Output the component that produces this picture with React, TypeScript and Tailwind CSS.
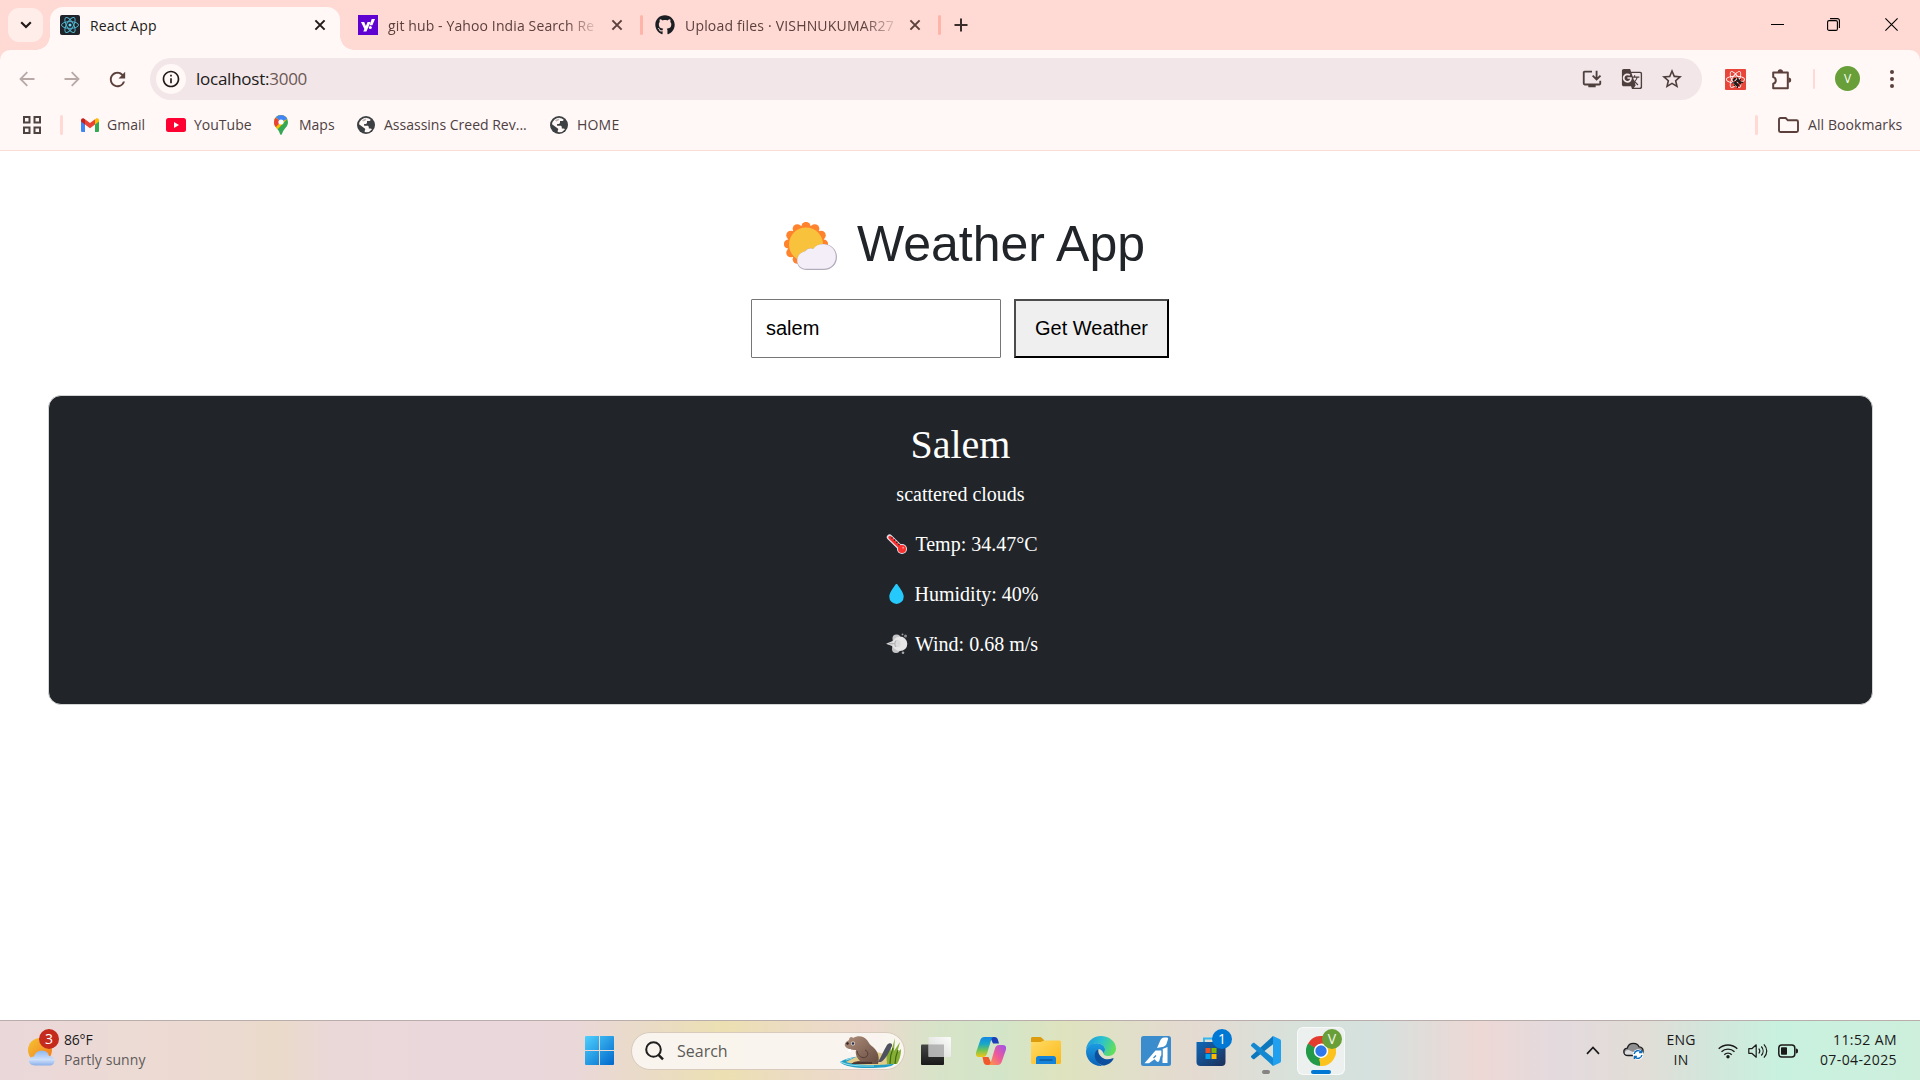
import React from "react";
import {
  MdOutlineInstallDesktop,
  MdGTranslate,
  MdStarOutline,
  MdInfoOutline,
  MdRefresh,
} from "react-icons/md";
import { FaGithub, FaReact, FaBug } from "react-icons/fa";

const ui = "font-['Open_Sans','Noto_Sans',sans-serif]";

/* ---------- small drawings ---------- */

function Cross({ className = "" }: { className?: string }) {
  return (
    <svg viewBox="0 0 12 12" className={`h-3 w-3 shrink-0 ${className}`}>
      <path d="M1.4 1.4l9.2 9.2M10.6 1.4l-9.2 9.2" stroke="currentColor" strokeWidth="2" fill="none" />
    </svg>
  );
}

function Arrow({ flip = false }: { flip?: boolean }) {
  return (
    <svg viewBox="0 0 16 16" className={flip ? "h-4 w-4 -scale-x-100" : "h-4 w-4"}>
      <path d="M15.500 8H2M8.300 1.200L1.500 8l6.800 6.800" stroke="#b8a9a7" strokeWidth="1.800" fill="none" />
    </svg>
  );
}

function Globe() {
  return (
    <svg viewBox="0 0 18 18" className="h-[18px] w-[18px] shrink-0">
      <circle cx="9" cy="9" r="9" fill="#3c4043" />
      <path
        d="M9.800 1.900c1.500.2 2.800.8 3.900 1.800-.2.900-.9 1.300-1.900 1.400H10v1.500c0 .9-.5 1.300-1.400 1.400l-1.500.1v1.600h3.200c1 0 1.500.6 1.500 1.500v1.200h1.500c.8 0 1.300.3 1.700.8a7.200 7.200 0 0 1-7.200 2.900c-.3-.7-.2-1.500.2-2.100.4-.5.300-1.100-.2-1.500L2 8.200A7.200 7.200 0 0 1 9.800 1.900z"
        fill="#fff8f6"
      />
      <path d="M5 4.200c1.500-1 3-1.600 4.600-1.500l-1.200 1.900-2 .8z" fill="#3c4043" fillOpacity=".35" />
    </svg>
  );
}

function Gmail() {
  return (
    <svg viewBox="0 0 18 14" className="h-[14px] w-[18px] shrink-0">
      <path d="M0 2.500V12.700C0 13.400.6 14 1.300 14H4V5.500z" fill="#4285f4" />
      <path d="M14 5.500V14h2.700c.7 0 1.300-.6 1.300-1.300V2.500z" fill="#34a853" />
      <path d="M4 1.300L9 5l5-3.700v5.200L9 10.300 4 6.500z" fill="#ea4335" />
      <path d="M0 2.300v1.300l4 3V1.300L3.200.700C1.800-.3 0 .6 0 2.300z" fill="#c5221f" />
      <path d="M14 1.300v5.300l4-3V2.300c0-1.700-1.800-2.600-3.200-1.600z" fill="#fbbc04" />
    </svg>
  );
}

function MapsPin() {
  return (
    <svg viewBox="0 0 14 20" className="h-5 w-[14px] shrink-0">
      <defs>
        <clipPath id="pin">
          <path d="M7 0a7 7 0 0 1 7 7c0 4-2.500 5.500-4.500 8.500C8.300 17.500 8 20 7 20s-1.300-2.500-2.500-4.500C2.500 12.500 0 11 0 7a7 7 0 0 1 7-7z" />
        </clipPath>
      </defs>
      <g clipPath="url(#pin)">
        <path d="M0 0h14v20H0z" fill="#34a853" />
        <path d="M0 0h14v3L3 15-1 9z" fill="#fbbc04" />
        <path d="M-1 1l8 5.500L2 12l-3-2z" fill="#ea4335" />
        <path d="M1.500 2L7 7l7-3.500V0H2z" fill="#4285f4" />
      </g>
      <circle cx="7" cy="7" r="2.600" fill="#fff" />
    </svg>
  );
}

function ReactFavicon() {
  return (
    <span className="flex h-5 w-5 shrink-0 items-center justify-center rounded-[2px] bg-[#20232a] text-[#4fb3cc]">
      <svg viewBox="0 0 20 20" className="h-5 w-5" fill="none" stroke="currentColor" strokeWidth="1">
        <ellipse cx="10" cy="10" rx="8.500" ry="3.400" />
        <ellipse cx="10" cy="10" rx="8.500" ry="3.400" transform="rotate(60 10 10)" />
        <ellipse cx="10" cy="10" rx="8.500" ry="3.400" transform="rotate(120 10 10)" />
        <circle cx="10" cy="10" r="1.500" fill="#61dafb" stroke="none" />
      </svg>
    </span>
  );
}

function YahooFavicon() {
  return (
    <span className="flex h-5 w-5 shrink-0 items-center justify-center bg-[#5f01d1]">
      <svg viewBox="0 0 20 20" className="h-5 w-5">
        <path d="M3 7h3.200l1.700 4L9.600 7h3L8.400 16.500H5.300L6.400 14z" fill="#fff" />
        <path d="M13.700 4H17l-2.600 6.200h-2.800z" fill="#fff" />
        <circle cx="12.300" cy="12.600" r="1.500" fill="#fff" />
      </svg>
    </span>
  );
}

function Puzzle() {
  return (
    <svg viewBox="0 0 22 22" className="h-[22px] w-[22px] shrink-0">
      <path
        d="M3.200 4.500h14.600v15.800H3.200v-4.600a3.400 3.400 0 0 0 0-6.600z"
        fill="none"
        stroke="#5b403c"
        strokeWidth="2"
        strokeLinejoin="round"
      />
      <path d="M7.600 4a2.700 2.700 0 0 1 5.400 0zM18.500 9.400a2.700 2.700 0 0 1 0 5.400z" fill="#5b403c" />
    </svg>
  );
}

function SunCloud() {
  const bumps = Array.from({ length: 12 }, (_, i) => (i * Math.PI) / 6);
  return (
    <svg viewBox="0 0 54 49" className="h-[49px] w-[54px] shrink-0">
      {bumps.map((a) => (
        <circle key={a} cx={22 + 17.5 * Math.cos(a)} cy={22 + 17.5 * Math.sin(a)} r="4.600" fill="#ff822d" />
      ))}
      <circle cx="22" cy="22" r="18.500" fill="#ff822d" />
      <circle cx="22" cy="22.500" r="17" fill="#f9c23c" />
      <path
        d="M22.500 48c-5.500 0-9.500-3.800-9.500-9 0-5 3.500-8.800 8-9.800 1.500-2.500 5.500-3.600 8.500-2.300 2.800-4.300 8-5.500 12.300-4.700 6.600.8 11.200 6.200 11.200 12.800C53 42.500 47.500 48 40 48z"
        fill="#b4acbc"
      />
      <path
        d="M22.500 46.800c-5.200 0-9.200-3.600-9.200-8.300 0-4.800 3.400-8.300 8-9.200 1.500-2.500 5.200-3.600 8-2.300 2.800-4.300 8-5.300 12-4.500 6 .8 10.500 5.800 10.500 12 0 6.800-4.800 12.300-12 12.300z"
        fill="#f3eef8"
      />
    </svg>
  );
}

function Thermometer() {
  return (
    <svg viewBox="0 0 22 22" className="h-[22px] w-[22px]">
      <path d="M3.600 4.200L15.700 16" stroke="#e5e1ea" strokeWidth="5.600" strokeLinecap="round" />
      <circle cx="16" cy="16" r="5" fill="#e5e1ea" />
      <path d="M4 4.500L16 16" stroke="#f8312f" strokeWidth="3.400" strokeLinecap="round" />
      <circle cx="16" cy="16" r="4" fill="#f8312f" />
      <path d="M6.500 4.300l-1 1.200M9 6.500L8 7.800M11.300 8.700l-1 1.300M13.500 10.900l-1 1.200" stroke="#2b2b30" strokeWidth="1.300" />
      <circle cx="17.200" cy="14.700" r="1" fill="#ff8a88" />
    </svg>
  );
}

function Droplet() {
  return (
    <svg viewBox="0 0 22 22" className="h-[22px] w-[22px]">
      <path
        d="M10.500 1c.7 0 1.200.7 1.800 1.700C14.500 6 17.700 10 17.700 13.700a7.200 7.200 0 0 1-14.400 0C3.300 10 6.500 6 8.700 2.700 9.300 1.700 9.800 1 10.500 1z"
        fill="#26c9fc"
      />
    </svg>
  );
}

function WindPuff() {
  return (
    <svg viewBox="0 0 22 22" className="h-[22px] w-[22px]">
      <circle cx="10.500" cy="5.500" r="4" fill="#c4c4c7" />
      <circle cx="10" cy="16" r="4" fill="#c4c4c7" />
      <path d="M0 10.700l6-2.400c1-1.500 3-2.500 5-2.400 4 0 7 2.300 7 5.500 0 3.500-3 5-7 4.500-3 0-4.500-1-5-3z" fill="#d8d8da" />
      <circle cx="14" cy="10.800" r="7.300" fill="#e6e6e6" />
      <circle cx="11" cy="10.700" r="3.600" fill="#dadadc" />
      <path d="M3 10.700h5.500M10 7.500c-1.500 1.500-1.500 5 0 6.500" stroke="#a5a5a8" strokeWidth=".9" fill="none" />
      <circle cx="19.500" cy="3" r="1.500" fill="#8b8b8f" />
      <circle cx="16.500" cy="1.400" r=".9" fill="#a5a5a8" />
      <circle cx="17" cy="19.800" r="1.300" fill="#a5a5a8" />
    </svg>
  );
}

function Beaver() {
  return (
    <svg viewBox="0 0 62 34" className="h-[34px] w-[62px]">
      <defs>
        <linearGradient id="fur" x1="0" x2="1" y1="0" y2="1">
          <stop offset="0" stopColor="#b08f7c" />
          <stop offset="1" stopColor="#654a3f" />
        </linearGradient>
      </defs>
      <path d="M0 27c8-5 18-6 30-6 14 0 25 3 24 8-2 3-12 4-26 4C14 33 4 31 0 27z" fill="#229fc4" />
      <path d="M6 27c8-4 15-8 26-10 9-1 20 5 26 9 2 3-14 4-26 4-12 0-20-1-26-3z" fill="#e2cc8c" />
      <path d="M1 27c7 4 20 4 33 4M6 25l6-2" stroke="#8edcec" strokeWidth="1.200" fill="none" />
      <path d="M47 29c-1-8 0-14 3-20l1 8 4-14-1 13 6-9-3 11 4-4c0 7-2 12-4 15z" fill="#86ad34" />
      <path d="M50 29c0-7 1-11 3-16M55 29c0-6 1-9 3-14" stroke="#3f6c16" strokeWidth="1.200" fill="none" />
      <path d="M38 27c3-5 6-12 9-17 2-3 6-2 5 1-3 6-6 13-11 16z" fill="#4f5160" />
      <path
        d="M12 29c2-3 5-3 8-3-3-3-5-7-4-11-5 0-9-1-11-4-1-3 2-5 4-6 0-3 3-4 4-2 5-3 11-2 14 2 2 3 3 5 6 7 5 4 7 11 5 17z"
        fill="url(#fur)"
      />
      <path d="M17 16c1 5 5 8 9 6 3-2 2-6-1-7" stroke="#563d33" strokeWidth="1" fill="none" />
      <path d="M11 29c4-3 12-2 21-2v2z" fill="#4c352e" />
      <circle cx="13" cy="8.500" r="2" fill="#eee9e6" />
      <circle cx="13" cy="8.500" r="1.300" fill="#252a45" />
      <path d="M8 14h3v3l-3-.5z" fill="#fff" />
      <path d="M6 8l2-1 1 2-2 1z" fill="#2c2525" />
    </svg>
  );
}

function WinLogo() {
  return (
    <svg viewBox="0 0 29 29" className="h-[29px] w-[29px]">
      <defs>
        <linearGradient id="win" x1="0" y1="0" x2="29" y2="29" gradientUnits="userSpaceOnUse">
          <stop offset="0" stopColor="#4fd0fd" />
          <stop offset="1" stopColor="#0067cb" />
        </linearGradient>
      </defs>
      <path
        d="M1 0h13v14H0V1a1 1 0 0 1 1-1zM15 0h13a1 1 0 0 1 1 1v13H15zM0 15h14v14H1a1 1 0 0 1-1-1zM15 15h14v13a1 1 0 0 1-1 1H15z"
        fill="url(#win)"
      />
    </svg>
  );
}

function TaskView() {
  return (
    <svg viewBox="0 0 30 30" className="h-[30px] w-[30px]">
      <defs>
        <linearGradient id="tvd" x1="0" x2="0" y1="0" y2="1">
          <stop offset="0" stopColor="#454545" />
          <stop offset="1" stopColor="#191919" />
        </linearGradient>
        <linearGradient id="tvl" x1="0" x2="1" y1="1" y2="0">
          <stop offset="0" stopColor="#d8d8d8" />
          <stop offset="1" stopColor="#ffffff" />
        </linearGradient>
      </defs>
      <rect x="0" y="8.500" width="23" height="20.500" rx="1" fill="url(#tvd)" />
      <rect x="7.500" y="1" width="22.500" height="20" rx="1" fill="url(#tvl)" fillOpacity=".9" />
      <path d="M7.500 8.500H23V21H7.500z" fill="#a8a8a8" fillOpacity=".75" />
    </svg>
  );
}

function Copilot() {
  return (
    <svg viewBox="0 0 30 28" className="h-7 w-[30px]">
      <defs>
        <linearGradient id="cpa" x1="0" x2="0" y1="0" y2="1">
          <stop offset="0" stopColor="#1288e4" />
          <stop offset=".35" stopColor="#17a8c8" />
          <stop offset=".65" stopColor="#6cc35b" />
          <stop offset="1" stopColor="#f3c613" />
        </linearGradient>
        <linearGradient id="cpb" x1="1" x2="0" y1="0" y2="1">
          <stop offset="0" stopColor="#9a54ee" />
          <stop offset=".5" stopColor="#ee5a9a" />
          <stop offset="1" stopColor="#ff9f3a" />
        </linearGradient>
      </defs>
      <path d="M14 0h4.500c2 0 3 1.200 3.500 3l1 3.500h-6z" fill="#1b3fb8" />
      <path d="M8.500 0H18c-2 0-2.600 2-3.200 4l-3.600 12c-.7 2.500-2 4-4.500 4H3c-2.500 0-3.600-2-3-4.500L4 4c.8-2.500 2-4 4.500-4z" fill="url(#cpa)" />
      <path d="M16 28h-5c-2 0-3-1.200-3.500-3L6.500 20h6z" fill="#f0592c" />
      <path d="M21.500 28H12c2 0 2.600-2 3.200-4l3.600-12c.7-2.500 2-4 4.500-4H27c2.500 0 3.600 2 3 4.500L26 24c-.8 2.500-2 4-4.500 4z" fill="url(#cpb)" />
    </svg>
  );
}

function Explorer() {
  return (
    <svg viewBox="0 0 30 27" className="h-[27px] w-[30px]">
      <defs>
        <linearGradient id="fld" x1="0" x2="1" y1="0" y2="1">
          <stop offset="0" stopColor="#ffdb66" />
          <stop offset="1" stopColor="#fcb918" />
        </linearGradient>
      </defs>
      <path d="M0 1.500C0 .7.700 0 1.500 0H9c.8 0 1.300.3 1.900.9L13 3v5H0z" fill="#dc9c0c" />
      <path d="M0 5h9.500L13 3.500h15.500A1.500 1.500 0 0 1 30 5v20.500c0 .8-.7 1.500-1.500 1.500h-27A1.500 1.500 0 0 1 0 25.500z" fill="url(#fld)" />
      <path d="M5 27v-5.500C5 20 6 19 7.500 19h15c1.500 0 2.500 1 2.500 2.500V27z" fill="#1583d8" />
      <path d="M8.500 23h13" stroke="#0b4f8f" strokeWidth="1.200" />
    </svg>
  );
}

function Edge() {
  return (
    <svg viewBox="0 0 30 30" className="h-[30px] w-[30px]">
      <defs>
        <linearGradient id="eda" x1="0" x2="1" y1=".2" y2=".5">
          <stop offset="0" stopColor="#1f97dd" />
          <stop offset=".5" stopColor="#2bc2cf" />
          <stop offset="1" stopColor="#61df5b" />
        </linearGradient>
        <linearGradient id="edb" x1="0" x2="0" y1="0" y2="1">
          <stop offset="0" stopColor="#1b9de2" />
          <stop offset="1" stopColor="#0b62b8" />
        </linearGradient>
      </defs>
      <path d="M0 14C.5 6 7 0 15 0s15 5.500 15 12.500c0 4.500-3.500 7.500-7.500 7.500-3.500 0-5-1.500-5-2.600 0-.8 1.500-1.700 1.500-4C19 10 15.500 7.500 11 7.500 5.500 7.500 1.200 10 0 14z" fill="url(#eda)" />
      <path d="M0 15.500C.3 10.500 4.500 7.300 10 7.300c5 0 9 2.500 9 6.200 0 2.300-1.300 3.200-1.500 4-1-3-3-4.500-5-4.500-3 2-4 9-.5 13.500 1.500 2 3.500 3.100 5 3.300C7.500 31 0 24 0 15.500z" fill="url(#edb)" />
      <path d="M12.500 13c-3.500 1.500-4.500 6-3 10 1.500 4 5.500 6.800 9 6.600 4-.8 7.300-3.300 9-6.500.4-.8-.3-1.200-1-.8-3 1.500-7.500 1.500-10.500-.8-3.200-2.300-4.300-5.500-3.500-8.500z" fill="#0c4f9e" />
    </svg>
  );
}

function AiApp() {
  return (
    <svg viewBox="0 0 30 30" className="h-[30px] w-[30px]">
      <rect width="30" height="30" rx="2.500" fill="#3b8ccd" />
      <path d="M16 12L19.500 4c.8-1.600 2-2.500 3.600-2.500H26c1 0 1.300 1 .9 2L25.500 8c-.6 1.600-1.800 2.300-3 2.800z" fill="#fff" />
      <path d="M14.500 14.500l6.500 0v3.800c0 .9-.5 1.400-1.400 1.700l-1.200 4.500c-.5 1.400-1.500 1.800-2.600.9l-2.300-2.200-5.500 4H3.500z" fill="#fff" />
      <path d="M21.500 13l5-2v16h-5z" fill="#fff" />
      <path d="M15 19.500l-2.500 2.500M21 13.500v8" stroke="#3b8ccd" strokeWidth="1.300" />
    </svg>
  );
}

function Store() {
  return (
    <svg viewBox="0 0 30 30" className="h-[30px] w-[30px]">
      <defs>
        <linearGradient id="sto" x1="0" x2="1" y1="0" y2="1">
          <stop offset="0" stopColor="#0f68b8" />
          <stop offset="1" stopColor="#1d2f59" />
        </linearGradient>
      </defs>
      <path d="M8 6V2.500h12" stroke="#33b8ee" strokeWidth="2" fill="none" />
      <path d="M.5 6h29v20a4 4 0 0 1-4 4h-21a4 4 0 0 1-4-4z" fill="url(#sto)" />
      <path d="M9.500 12h5v5h-5z" fill="#f25022" />
      <path d="M15.500 12h5v5h-5z" fill="#7fba00" />
      <path d="M9.500 18h5v5h-5z" fill="#00a4ef" />
      <path d="M15.500 18h5v5h-5z" fill="#ffb900" />
    </svg>
  );
}

function VsCode() {
  return (
    <svg viewBox="0 0 30 30" className="h-[30px] w-[30px]">
      <path d="M22 0l7 3.200c.7.400 1 .9 1 1.700v20.200c0 .8-.3 1.300-1 1.700L22 30z" fill="#22a0f0" />
      <path d="M22 0v8.300L3.500 23c-.6.4-1.100.4-1.600 0L.4 21.500c-.6-.6-.6-1.200 0-1.800z" fill="#0d77bd" />
      <path d="M22 30v-8.300L3.500 7c-.6-.4-1.100-.4-1.600 0L.4 8.500c-.6.6-.6 1.200 0 1.800z" fill="#1489d2" />
    </svg>
  );
}

function Chrome() {
  return (
    <svg viewBox="0 0 30 30" className="h-[30px] w-[30px]">
      <path d="M15 15V30A15 15 0 0 1 2 7.500z" fill="#229a48" />
      <path d="M15 15L28 7.500A15 15 0 0 1 14 30z" fill="#fcc31e" />
      <path d="M15 7.500h13L22 17z" fill="#fcc31e" />
      <path d="M2 7.500l6.500 11.200L15 15z" fill="#229a48" />
      <path d="M21.500 18.700L15 30l-2-7z" fill="#fcc31e" />
      <path d="M2 7.500A15 15 0 0 1 28 7.500H15l-6.500 4z" fill="#e33b2e" />
      <circle cx="15" cy="15" r="7.200" fill="#fff" />
      <circle cx="15" cy="15" r="5.700" fill="#2f78ec" />
    </svg>
  );
}

/* ---------- browser chrome ---------- */

function TabStrip() {
  return (
    <div className={`flex h-[50px] w-full bg-[#ffd9d3] text-[14px] ${ui}`}>
      <div className="ml-2 mt-2 flex h-[34px] w-[35px] shrink-0 items-center justify-center rounded-[11px] bg-[#ffede9]">
        <svg viewBox="0 0 12 8" className="h-2 w-3">
          <path d="M1.200 1.300L6 6l4.800-4.700" stroke="#201a19" strokeWidth="2.200" fill="none" />
        </svg>
      </div>

      <div className="relative ml-[7px] mt-[7px] flex h-[43px] w-[290px] shrink-0 items-center rounded-t-[13px] bg-[#fff8f6] pb-[7px] pl-[10px] text-[#201a19]">
        <span className="absolute -left-[14px] bottom-0 h-[14px] w-[14px] bg-[radial-gradient(circle_at_0_0,transparent_13.500px,#fff8f6_14px)]" />
        <span className="absolute -right-[14px] bottom-0 h-[14px] w-[14px] bg-[radial-gradient(circle_at_100%_0,transparent_13.500px,#fff8f6_14px)]" />
        <ReactFavicon />
        <span className="ml-[10px] mt-px w-[225px] whitespace-nowrap tracking-[0.12px]">React App</span>
        <Cross className="-ml-[1px]" />
      </div>

      <div className="ml-[18px] flex h-[50px] w-[265px] shrink-0 items-center text-[#5b403c]">
        <YahooFavicon />
        <span className="ml-[10px] mt-px w-[212px] whitespace-nowrap tracking-[0.12px] [mask-image:linear-gradient(to_right,black_178px,transparent_212px)]">
          git hub - Yahoo India Search Re
        </span>
        <Cross className="ml-[13px]" />
      </div>
      <div className="ml-[17px] mt-[15px] h-5 w-[3px] rounded bg-[#ffb4a9]" />

      <div className="ml-3 flex h-[50px] w-[267px] shrink-0 items-center text-[#5b403c]">
        <FaGithub className="h-5 w-5 shrink-0 text-[#1b1f23]" />
        <span className="ml-[10px] mt-px w-[212px] whitespace-nowrap tracking-[0.18px] [mask-image:linear-gradient(to_right,black_178px,transparent_216px)]">
          Upload files · VISHNUKUMAR27
        </span>
        <Cross className="ml-[12px]" />
      </div>
      <div className="ml-4 mt-[15px] h-5 w-[3px] rounded bg-[#ffb4a9]" />
      <svg viewBox="0 0 14 14" className="ml-[13px] mt-[18px] h-[14px] w-[14px]">
        <path d="M7 .5v13M.5 7h13" stroke="#3b2d2a" strokeWidth="2" />
      </svg>

      <div className="ml-auto mr-[22px] mt-[18px] flex h-[13px] items-start text-black">
        <svg viewBox="0 0 13 13" className="h-[13px] w-[13px]">
          <path d="M0 6.500h13" stroke="currentColor" strokeWidth="1" />
        </svg>
        <svg viewBox="0 0 13 13" className="ml-[43px] h-[13px] w-[13px]" fill="none" stroke="currentColor" strokeWidth="1.100">
          <rect x=".6" y="2.600" width="9.800" height="9.800" rx="1.500" />
          <path d="M3 .6h7.400a2 2 0 0 1 2 2V10" />
        </svg>
        <svg viewBox="0 0 13 13" className="ml-[45px] h-[13px] w-[13px]">
          <path d="M.4.4l12.200 12.200M12.600.4L.4 12.600" stroke="currentColor" strokeWidth="1.100" />
        </svg>
      </div>
    </div>
  );
}

function Toolbar() {
  return (
    <div className="flex h-[50px] items-center pt-[8px]">
      <div className="ml-[19px] flex h-[42px] w-[131px] shrink-0 items-center">
        <Arrow />
        <span className="ml-[29px] h-4">
          <Arrow flip />
        </span>
        <MdRefresh className="ml-[26px] h-[23px] w-[23px] text-[#5b403c]" />
      </div>
      <div className="flex h-[42px] w-[1552px] shrink-0 items-center rounded-full bg-[#f2e6e8] pl-[6px] text-[#4d3f3c]">
        <span className="flex h-[30px] w-[30px] items-center justify-center rounded-full bg-[#fff8f6]">
          <MdInfoOutline className="h-5 w-5 text-[#201a19]" />
        </span>
        <span className={`ml-[10px] text-[17px] tracking-[-0.25px] ${ui}`}>
          <span className="text-[#201a19]">localhost:</span>
          <span className="text-[#6b5854]">3000</span>
        </span>
        <span className="ml-auto mr-[19px] flex items-center gap-[18px]">
          <MdOutlineInstallDesktop className="h-[22px] w-[22px]" />
          <MdGTranslate className="h-[22px] w-[22px]" />
          <MdStarOutline className="-mx-[1px] h-6 w-6" />
        </span>
      </div>
      <span className="relative ml-[23px] flex h-[21px] w-[21px] shrink-0 items-center justify-center rounded-[1px] bg-[#e8463a]">
        <FaReact className="h-[19px] w-[19px] text-white" />
        <FaBug className="absolute left-[7px] top-[8px] h-[10px] w-[10px] -rotate-45 text-[#201a19]" />
      </span>
      <span className="ml-[24px]">
        <Puzzle />
      </span>
      <span className="ml-[21px] h-5 w-[2px] rounded bg-[#ffd9d3]" />
      <span className={`-mt-px ml-5 flex h-[25px] w-[25px] items-center justify-center rounded-full bg-[#689f38] text-[12px] text-white ${ui}`}>V</span>
      <svg viewBox="0 0 4 18" className="ml-[30px] h-[18px] w-1" fill="#5b403c">
        <circle cx="2" cy="2" r="2" />
        <circle cx="2" cy="9" r="2" />
        <circle cx="2" cy="16" r="2" />
      </svg>
    </div>
  );
}

function Bookmark({ className = "", children }: { className?: string; children: React.ReactNode }) {
  return <span className={`-mt-[2px] shrink-0 ${className}`}>{children}</span>;
}

function Bookmarks() {
  return (
    <div className={`flex h-[50px] items-center whitespace-nowrap pl-[23px] text-[14px] text-[#4d4043] ${ui}`}>
      <svg viewBox="0 0 18 18" className="h-[18px] w-[18px] shrink-0" fill="none" stroke="#4f4340" strokeWidth="2">
        <path d="M1 1h5.500v5.500H1zM11.500 1H17v5.500h-5.500zM1 11.500h5.500V17H1zM11.500 11.500H17V17h-5.500z" />
      </svg>
      <span className="ml-[19px] mr-[18px] h-5 w-[3px] shrink-0 rounded bg-[#ffd9d3]" />
      <Gmail />
      <Bookmark className="ml-[8px] w-[59px]">Gmail</Bookmark>
      <svg viewBox="0 0 20 14" className="h-[14px] w-5 shrink-0">
        <rect width="20" height="14" rx="2.500" fill="#ff0033" />
        <path d="M8 4v6l5-3z" fill="#fff" />
      </svg>
      <Bookmark className="ml-[8px] w-[80px]">YouTube</Bookmark>
      <MapsPin />
      <Bookmark className="ml-[11px] w-[58px]">Maps</Bookmark>
      <Globe />
      <Bookmark className="ml-[9px] w-[166px]">Assassins Creed Rev...</Bookmark>
      <Globe />
      <Bookmark className="ml-[9px] tracking-[0.2px]">HOME</Bookmark>
      <span className="ml-auto mr-5 h-5 w-[3px] rounded bg-[#ffd9d3]" />
      <svg viewBox="0 0 21 16" className="h-4 w-[21px]">
        <path
          d="M1 13.500V2.500C1 1.700 1.600 1 2.400 1h5.300l2.200 2.300h8.700c.8 0 1.400.6 1.400 1.400v8.900c0 .8-.6 1.400-1.400 1.400H2.400c-.8 0-1.400-.7-1.400-1.500z"
          fill="none"
          stroke="#5b403c"
          strokeWidth="1.900"
        />
      </svg>
      <Bookmark className="ml-[9px] w-[112px] tracking-[0.08px]">All Bookmarks</Bookmark>
    </div>
  );
}

/* ---------- page ---------- */

function Reading({ icon, children }: { icon: React.ReactNode; children: React.ReactNode }) {
  return (
    <div className="mt-5 flex h-[30px] items-center justify-center gap-[7px] pl-[3px]">
      {icon}
      <span>{children}</span>
    </div>
  );
}

function WeatherPage() {
  return (
    <main className="flex h-[869px] flex-col items-center bg-white">
      <h1 className="mt-[63px] flex h-[60px] items-center pl-[9px] font-['Liberation_Sans',sans-serif] text-[50px] leading-[60px] text-[#212529]">
        <span className="mt-1">
          <SunCloud />
        </span>
        <span className="ml-[19px]">Weather App</span>
      </h1>
      <div className="mt-[25px] flex gap-[13px] font-['Liberation_Sans',sans-serif] text-[20px] text-black">
        <input
          defaultValue="salem"
          className="h-[59px] w-[250px] rounded-[1px] border border-[#767676] bg-white px-[14px] outline-none"
        />
        <button className="h-[59px] w-[155px] border-2 border-b-black border-l-[#4c4c4c] border-r-black border-t-[#4c4c4c] bg-[#efefef] pb-[2px]">
          Get Weather
        </button>
      </div>
      <section className="ml-px mt-[37px] h-[310px] w-[1825px] rounded-[13px] border border-[#d3d4d4] bg-[#212529] text-center font-['Liberation_Serif',serif] text-[20px] leading-[30px] text-white">
        <h2 className="mt-[25px] text-[40px] leading-[48px]">Salem</h2>
        <p className="mt-[10px]">scattered clouds</p>
        <Reading icon={<Thermometer />}>Temp: 34.47°C</Reading>
        <Reading icon={<Droplet />}>Humidity: 40%</Reading>
        <Reading icon={<WindPuff />}>Wind: 0.68 m/s</Reading>
      </section>
    </main>
  );
}

/* ---------- taskbar ---------- */

function Slot({ children, badge, badgeClass = "" }: { children: React.ReactNode; badge?: string; badgeClass?: string }) {
  return (
    <div className="relative flex h-full w-[55px] shrink-0 items-center justify-center">
      {children}
      {badge && (
        <span className={`absolute right-[6px] top-[8px] flex h-5 w-5 items-center justify-center rounded-full text-[14px] leading-none ${badgeClass}`}>
          {badge}
        </span>
      )}
    </div>
  );
}

function Taskbar() {
  return (
    <footer
      className={`flex h-[60px] items-center border-t border-[#b9aeab] bg-[linear-gradient(to_right,#ead7da_0px,#ecdad4_130px,#ebdacf_240px,#eadac9_275px,#ead8d8_330px,#ead7dc_450px,#ead7da_570px,#e9dbc8_640px,#ece0b2_725px,#ebdcc2_790px,#edd9ce_870px,#d8e3c8_930px,#d3e5c8_1000px,#dfe3be_1065px,#e0dfc8_1120px,#e4dad1_1195px,#d8e1da_1290px,#d5e1de_1370px,#edd8d5_1480px,#e3dade_1560px,#e2ddd6_1640px,#d2e6dc_1710px,#c9f1df_1780px,#cdefdc_1920px)] ${ui}`}
    >
      <div className="ml-[27px] flex w-[543px] shrink-0 items-center">
        <div className="relative -mt-[3px] h-[40px] w-[32px]">
          <svg viewBox="0 0 32 40" className="h-10 w-8">
            <defs>
              <linearGradient id="sn" x1="0" x2="1" y1="0" y2="1">
                <stop offset="0" stopColor="#f3c534" />
                <stop offset="1" stopColor="#f5761b" />
              </linearGradient>
              <linearGradient id="cl" x1="0" x2="0" y1="0" y2="1">
                <stop offset="0" stopColor="#8db8f0" />
                <stop offset=".6" stopColor="#cfe0fa" />
                <stop offset="1" stopColor="#8bb0ea" />
              </linearGradient>
            </defs>
            <circle cx="13" cy="21" r="12" fill="url(#sn)" />
            <path d="M8 36.500c-4 0-6-2-6-4.700 0-2.800 2.300-4.500 5-4.300C8 23.500 11 21.700 15 21.700s6.500 2 7 5.300c3 0 5.500 1.800 5.500 4.700 0 2.800-2 4.800-5 4.800z" fill="url(#cl)" />
          </svg>
          <span className="absolute left-[12px] top-0 flex h-5 w-5 items-center justify-center rounded-full bg-[#c42b1c] text-[14px] leading-none text-white">3</span>
        </div>
        <div className="-mt-[2px] ml-[5px] text-[14px] leading-[20px]">
          <div className="tracking-[-0.2px] text-[#1b1a1a]">86°F</div>
          <div className="tracking-[0.08px] text-[#5f5a5a]">Partly sunny</div>
        </div>
      </div>
      <div className="flex w-[61px] shrink-0 justify-center pr-[2px]">
        <WinLogo />
      </div>
      <div className="flex h-[38px] w-[274px] shrink-0 items-center rounded-full border border-[#d8cbbd] bg-[#faf6f0]/95 pl-[13px]">
        <svg viewBox="0 0 20 20" className="h-5 w-5" fill="none" stroke="#201f1f" strokeWidth="2">
          <circle cx="8.500" cy="8.500" r="7.300" />
          <path d="M13.500 13.800l4.500 4.500" strokeWidth="2.400" />
        </svg>
        <span className="ml-[12px] text-[16px] text-[#5c5a58]">Search</span>
        <span className="ml-auto mr-[2px] mt-[2px]">
          <Beaver />
        </span>
      </div>
      <div className="ml-[3px] flex h-full">
        <Slot><TaskView /></Slot>
        <Slot><Copilot /></Slot>
        <Slot><Explorer /></Slot>
        <Slot><Edge /></Slot>
        <Slot><AiApp /></Slot>
        <Slot badge="1" badgeClass="bg-[#0078d4] text-white"><Store /></Slot>
        <Slot>
          <VsCode />
          <span className="absolute bottom-[6px] h-1 w-2 rounded-full bg-[#858483]" />
        </Slot>
        <Slot badge="V" badgeClass="bg-[#689f38] text-white/90">
          <span className="flex h-[48px] w-[48px] items-center justify-center rounded-md border border-white/60 bg-[#eef3f1]/90">
            <Chrome />
          </span>
          <span className="absolute bottom-[6px] h-1 w-5 rounded-full bg-[#0078d4]" />
        </Slot>
      </div>
      <div className="ml-auto mr-[23px] flex shrink-0 items-center text-[#1b1a1a]">
        <svg viewBox="0 0 14 9" className="h-[9px] w-[14px]">
          <path d="M1 7.800L7 1.500l6 6.300" stroke="currentColor" strokeWidth="1.700" fill="none" />
        </svg>
        <svg viewBox="0 0 21 18" className="ml-[23px] h-[18px] w-[21px]">
          <path d="M5 13.500C2.300 13.500.8 12 .8 9.700c0-2 1.500-3.400 3.500-3.600C5 3 7.500 1.300 10.500 1.300c2.800 0 4.700 1.300 5.600 3.600 2.400.2 4 1.800 4 4.200 0 2.500-1.800 4.400-4.500 4.400z" fill="#8f8f8f" stroke="#1d1d1d" strokeWidth="1.300" />
          <path d="M1.800 11.500c0-3 3-4.500 6-2.500l8 3.500H5c-2 0-3-.3-3.200-1z" fill="#dedede" />
          <circle cx="15" cy="12.500" r="5.300" fill="#fff" />
          <path d="M11.200 12a3.900 3.900 0 0 1 7-1.800M18.900 13a3.900 3.900 0 0 1-7 1.800M18.600 8v2.500h-2.500M11.400 17v-2.500h2.500" stroke="#0f6cbd" strokeWidth="1.400" fill="none" />
        </svg>
        <div className="-mt-px ml-[15px] w-[44px] text-center text-[14px] leading-[20px] tracking-[0.2px]">
          <div>ENG</div>
          <div>IN</div>
        </div>
        <svg viewBox="0 0 20 16" className="ml-[15px] h-4 w-5" fill="none" stroke="currentColor" strokeWidth="1.400">
          <path d="M.7 5.800a13.200 13.200 0 0 1 18.600 0M3.500 8.800a9.200 9.200 0 0 1 13 0M6.300 11.700a5.200 5.200 0 0 1 7.400 0" />
          <circle cx="10" cy="13.800" r="1.700" fill="currentColor" stroke="none" />
        </svg>
        <svg viewBox="0 0 20 16" className="ml-[10px] h-4 w-5" fill="none" stroke="currentColor" strokeWidth="1.200">
          <path d="M.8 5.700h3L8.200 1.800v12.400L3.800 10.300h-3z" strokeLinejoin="round" />
          <path d="M10.800 5.500c1.200 1.500 1.200 3.500 0 5M13.300 3.500c2.400 2.600 2.400 6.400 0 9M15.900 1.300c3.800 4 3.800 9.400 0 13.400" />
        </svg>
        <svg viewBox="0 0 20 14" className="ml-[10px] h-[14px] w-5">
          <rect x=".8" y="1" width="16" height="12" rx="3" fill="none" stroke="currentColor" strokeWidth="1.500" />
          <rect x="3" y="3.200" width="6" height="7.600" rx=".8" fill="currentColor" />
          <path d="M17.800 4.500c2 .2 2.200 1 2.200 2.500s-.2 2.300-2.200 2.500z" fill="currentColor" />
        </svg>
        <div className="-mt-[2px] w-[99px] text-right text-[14px] leading-[20px]">
          <div className="tracking-[0.4px]">11:52 AM</div>
          <div className="tracking-[0.4px]">07-04-2025</div>
        </div>
      </div>
    </footer>
  );
}

export default function App() {
  return (
    <div className="flex h-[1080px] w-[1920px] flex-col overflow-hidden bg-white">
      <TabStrip />
      <div className="h-[101px] bg-[#ffd9d3]">
        <div className="h-[101px] rounded-t-[10px] border-b border-[#fbdcd6] bg-[#fff8f6]">
          <Toolbar />
          <Bookmarks />
        </div>
      </div>
      <WeatherPage />
      <Taskbar />
    </div>
  );
}
